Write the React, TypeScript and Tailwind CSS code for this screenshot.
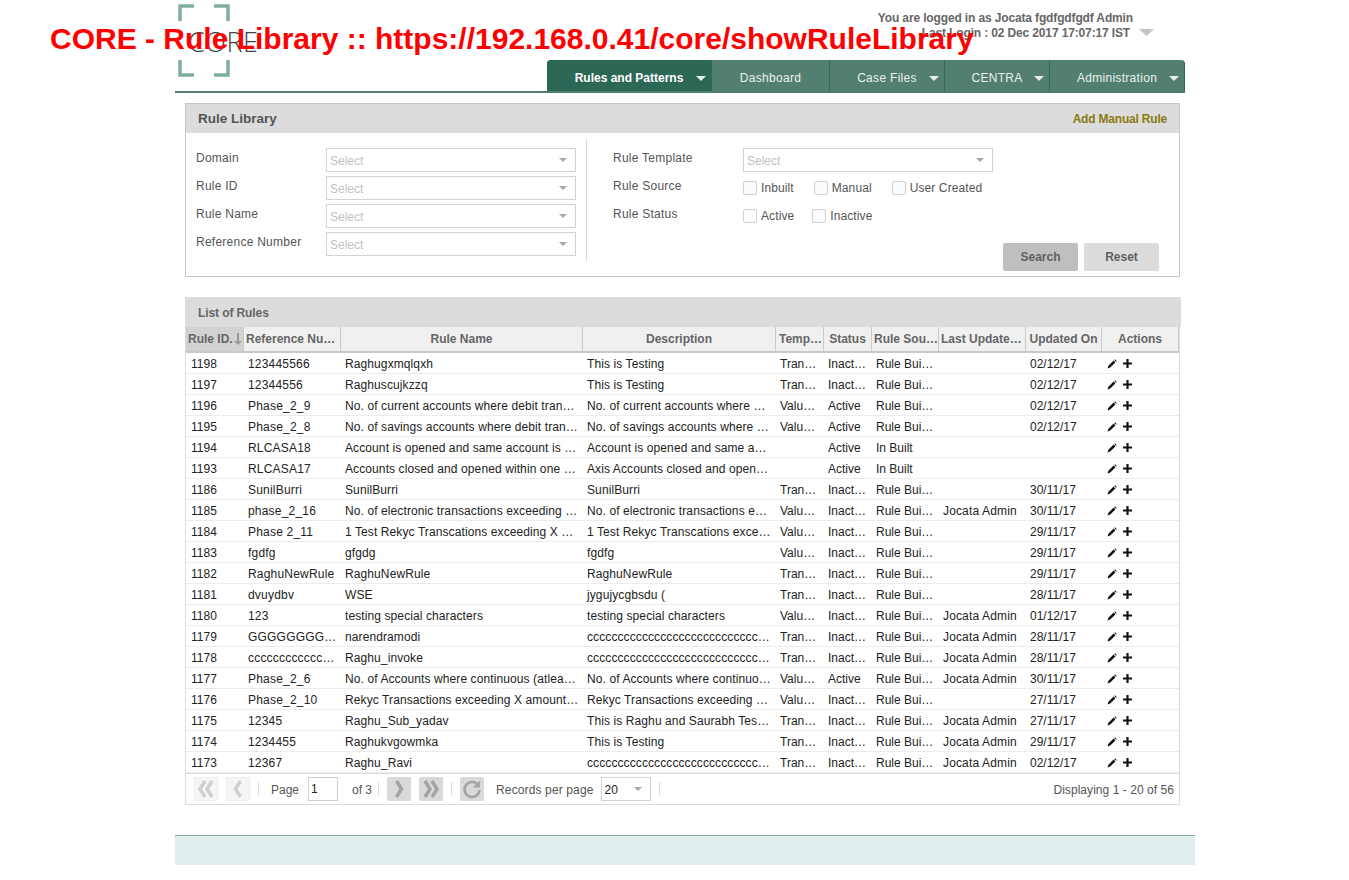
import React from "react";

const F = "font-['Liberation_Sans',Arial,sans-serif]";
const cols = "grid-cols-[58px_97px_242px_193px_48px_48px_67px_87px_76px_77px]";
type R = [string, string, string, string, string, string, string, string, string];
const T = "Transaction Pattern";
const V = "Value Based Pattern";
const I = "Inactive";
const A = "Active";
const B = "Rule Builder";
const J = "Jocata Admin";
const C = "cccccccccccccccccccccccccccccccccccccccccccccccccccccc";
const rows: R[] = [
  ["1198", "123445566", "Raghugxmqlqxh", "This is Testing", T, I, B, "", "02/12/17"],
  ["1197", "12344556", "Raghuscujkzzq", "This is Testing", T, I, B, "", "02/12/17"],
  ["1196", "Phase_2_9", "No. of current accounts where debit transactions exceeding", "No. of current accounts where debit transactions", V, A, B, "", "02/12/17"],
  ["1195", "Phase_2_8", "No. of savings accounts where debit transactions exceeding", "No. of savings accounts where debit transactions", V, A, B, "", "02/12/17"],
  ["1194", "RLCASA18", "Account is opened and same account is closed within", "Account is opened and same account is closed", "", A, "In Built", "", ""],
  ["1193", "RLCASA17", "Accounts closed and opened within one month of each other", "Axis Accounts closed and opened within one", "", A, "In Built", "", ""],
  ["1186", "SunilBurri", "SunilBurri", "SunilBurri", T, I, B, "", "30/11/17"],
  ["1185", "phase_2_16", "No. of electronic transactions exceeding X amount in a period", "No. of electronic transactions exceeding X", V, I, B, J, "30/11/17"],
  ["1184", "Phase 2_11", "1 Test Rekyc Transcations exceeding X amount in a period", "1 Test Rekyc Transcations exceeding X amount", V, I, B, "", "29/11/17"],
  ["1183", "fgdfg", "gfgdg", "fgdfg", V, I, B, "", "29/11/17"],
  ["1182", "RaghuNewRule", "RaghuNewRule", "RaghuNewRule", T, I, B, "", "29/11/17"],
  ["1181", "dvuydbv", "WSE", "jygujycgbsdu (", T, I, B, "", "28/11/17"],
  ["1180", "123", "testing special characters", "testing special characters", V, I, B, J, "01/12/17"],
  ["1179", "GGGGGGGGGGGGGG", "narendramodi", C, T, I, B, J, "28/11/17"],
  ["1178", "cccccccccccccccccccc", "Raghu_invoke", C, T, I, B, J, "28/11/17"],
  ["1177", "Phase_2_6", "No. of Accounts where continuous (atleast) transactions over", "No. of Accounts where continuous transactions", V, A, B, J, "30/11/17"],
  ["1176", "Phase_2_10", "Rekyc Transactions exceeding X amount in a given period", "Rekyc Transactions exceeding X amount in a", V, I, B, "", "27/11/17"],
  ["1175", "12345", "Raghu_Sub_yadav", "This is Raghu and Saurabh Testing the rule", T, I, B, J, "27/11/17"],
  ["1174", "1234455", "Raghukvgowmka", "This is Testing", T, I, B, J, "29/11/17"],
  ["1173", "12367", "Raghu_Ravi", C, T, I, B, J, "02/12/17"],
];

function Caret({ className }: { className: string }) {
  return (
    <svg viewBox="0 0 10 5" preserveAspectRatio="none" className={className}>
      <path d="M0 0h10L5 5z" fill="currentColor" />
    </svg>
  );
}

function Select({ w = "w-[250px]", value, placeholder = "Select" }: { w?: string; value?: string; placeholder?: string }) {
  return (
    <div className={`${w} h-6 border border-[#d2d2d2] bg-white flex items-center justify-between pl-[3px] pr-[8px] shrink-0`}>
      <span className={`pt-[2px] ${value ? "text-[#222]" : "text-[#c2c2c2]"}`}>{value ?? placeholder}</span>
      <Caret className="w-[8px] h-[4px] text-[#a8a8a8]" />
    </div>
  );
}

function Check({ label, className = "" }: { label: string; className?: string }) {
  return (
    <div className={`flex items-center text-[#555] tracking-[0.1px] ${className}`}>
      <span className="w-[14px] h-[14px] border border-[#d0d0d0] rounded-[2px] bg-[#fbfbfb] mr-[4px]" />
      <span>{label}</span>
    </div>
  );
}

function Field({ label, children, w }: { label: string; children: React.ReactNode; w: string }) {
  return (
    <div className="flex h-6 items-start mb-1">
      <span className={`${w} text-[#555] leading-[20px] tracking-[0.25px]`}>{label}</span>
      {children}
    </div>
  );
}

function Pencil() {
  return (
    <svg viewBox="0 0 10 10" className="w-[10px] h-[10px]">
      <path d="M0.5 9.5 L1.4 6.8 L6.6 1.6 L8.4 3.4 L3.2 8.6 Z M7.3 0.9 L8 0.3 L9.7 2 L9.1 2.7 Z" fill="#111" />
    </svg>
  );
}

function Plus() {
  return (
    <svg viewBox="0 0 10 10" className="w-[9px] h-[9px]">
      <path d="M3.8 0h2.4v3.8H10v2.4H6.2V10H3.8V6.2H0V3.8h3.8z" fill="#111" />
    </svg>
  );
}

function PagerBtn({ kind, on, className = "" }: { kind: "first" | "prev" | "next" | "last" | "refresh"; on?: boolean; className?: string }) {
  const stroke = on ? "#a4a4a4" : "#d0d0d0";
  const paths: Record<string, string> = {
    first: "M11 4 L6 12 L11 20 M18 4 L13 12 L18 20",
    prev: "M14.5 4 L9.5 12 L14.5 20",
    next: "M9.5 4 L14.5 12 L9.5 20",
    last: "M6 4 L11 12 L6 20 M13 4 L18 12 L13 20",
    refresh: "M18 8 A7.5 7.5 0 1 0 19.5 13",
  };
  return (
    <div className={`w-6 h-6 rounded-[2px] flex items-center justify-center shrink-0 ${on ? "bg-[#dadada]" : "bg-[#f6f6f6] border border-[#eeeeee]"} ${className}`}>
      <svg viewBox="0 0 24 24" className="w-6 h-6 shrink-0">
        <path d={paths[kind]} fill="none" stroke={stroke} strokeWidth={kind === "refresh" ? 2.6 : 3.6} />
        {kind === "refresh" && <path d="M20 3.5v7h-7z" fill={stroke} />}
      </svg>
    </div>
  );
}

const Sep = ({ className }: { className: string }) => <span className={`w-px h-[14px] bg-[#dcdcdc] shrink-0 ${className}`} />;

function Tab({ label, w, caret, active }: { label: string; w: string; caret?: boolean; active?: boolean }) {
  return (
    <div className={`${w} h-full relative flex items-center justify-center border-r border-[#2f6a58] last:border-r-0 ${active ? "bg-[#2d6856] text-white font-bold" : "text-[#eaf1ee] tracking-[0.3px]"}`}>
      <span className="pt-[5px]">{label}</span>
      {caret && <Caret className="absolute right-[5px] top-[16px] w-[10px] h-[5px] text-[#e9efec]" />}
    </div>
  );
}

export default function App() {
  return (
    <div className={`${F} relative min-h-[880px] bg-white text-[12px] overflow-hidden`}>
      <div className="absolute left-[50px] top-[21px] text-[30px] leading-[36px] font-bold text-[#ff0000] whitespace-nowrap z-10">
        CORE - Rule Library :: https://192.168.0.41/core/showRuleLibrary
      </div>

      <div className="ml-[175px] w-[1020px]">
        <header className="w-[1010px] h-[93px] border-b-2 border-[#4f7d6f] flex justify-between">
          <div className="relative w-[100px] h-[91px]">
            <svg viewBox="0 0 52 73" className="absolute left-[3px] top-[4px] w-[52px] h-[73px]">
              <path d="M16 2H2V17 M36 2H50V17 M2 56V71H16 M50 56V71H36" fill="none" stroke="#7fae9f" strokeWidth="3.5" />
            </svg>
            <span className="absolute left-[13px] top-[24px] text-[27px] leading-[36px] text-[#444] font-['Open_Sans',sans-serif] font-light tracking-[0.5px]">CORE</span>
          </div>
          <div className="w-[638px] flex flex-col items-stretch">
            <div className="h-[60px] pt-[11px] pr-[52px] text-right font-bold text-[#666] leading-[15px] relative tracking-[-0.14px]">
              <div>You are logged in as Jocata fgdfgdfgdf Admin</div>
              <div className="pr-[3px]">Last Login : 02 Dec 2017 17:07:17 IST</div>
              <Caret className="absolute right-[31px] top-[29px] w-[15px] h-[7px] text-[#c4c4c4]" />
            </div>
            <nav className="h-[31px] flex rounded-t-[4px] overflow-hidden bg-[#527f70] border-r border-[#2f6a58]">
              <Tab label="Rules and Patterns" w="w-[165px]" caret active />
              <Tab label="Dashboard" w="w-[118px]" />
              <Tab label="Case Files" w="w-[115px]" caret />
              <Tab label="CENTRA" w="w-[105px]" caret />
              <Tab label="Administration" w="flex-1" caret />
            </nav>
          </div>
        </header>

        <section className="ml-[10px] w-[995px] mt-[10px] h-[174px] border border-[#c6c6c6]">
          <div className="h-[29px] bg-[#dcdcdc] flex items-center justify-between pl-[12px] pr-[12px]">
            <span className="font-bold text-[13.5px] text-[#555] pt-[2px]">Rule Library</span>
            <span className="font-bold text-[#8a7a10] tracking-[-0.2px]">Add Manual Rule</span>
          </div>
          <div className="flex pt-[15px] pl-[10px]">
            <div className="w-[390px]">
              <Field label="Domain" w="w-[130px]"><Select /></Field>
              <Field label="Rule ID" w="w-[130px]"><Select /></Field>
              <Field label="Rule Name" w="w-[130px]"><Select /></Field>
              <Field label="Reference Number" w="w-[130px]"><Select /></Field>
            </div>
            <div className="w-px h-[122px] bg-[#d6d6d6] -mt-[9px]" />
            <div className="pl-[26px] flex-1 relative">
              <Field label="Rule Template" w="w-[130px]"><Select /></Field>
              <Field label="Rule Source" w="w-[130px]">
                <div className="flex h-6 pt-[3px] items-start">
                  <Check label="Inbuilt" className="mr-[20px]" />
                  <Check label="Manual" className="mr-[20px]" />
                  <Check label="User Created" />
                </div>
              </Field>
              <Field label="Rule Status" w="w-[130px]">
                <div className="flex h-6 pt-[3px] items-start">
                  <Check label="Active" className="mr-[18px]" />
                  <Check label="Inactive" />
                </div>
              </Field>
              <div className="flex justify-end gap-[6px] pr-[20px] mt-[15px]">
                <button className="w-[75px] h-[28px] rounded-[2px] bg-[#bfbfbf] font-bold text-[#5f5f5f]">Search</button>
                <button className="w-[75px] h-[28px] rounded-[2px] bg-[#dcdcdc] font-bold text-[#5f5f5f]">Reset</button>
              </div>
            </div>
          </div>
        </section>

        <section className="ml-[10px] w-[996px] mt-[20px]">
          <div className="h-[30px] bg-[#dcdcdc] flex items-center pl-[13px] pt-[2px] font-bold text-[#666] tracking-[-0.1px]">List of Rules</div>
          <div className="w-[995px] border-x border-b border-[#dcdcdc]">
            <div className={`grid ${cols} h-[24px] bg-[#f0f0f0] border-b-2 border-[#c9c9c9] font-bold text-[#666] box-content`}>
              <div className="bg-[#d2d2d2] flex items-center pl-[2px] border-r border-[#c9c9c9] whitespace-nowrap overflow-hidden">
                Rule ID.
                <svg viewBox="0 0 8 12" className="w-[8px] h-[12px] ml-[1px] shrink-0"><path d="M3 0h2v8h3l-4 4-4-4h3z" fill="#999" /></svg>
              </div>
              <div className="flex items-center pl-[2px] border-r border-[#c9c9c9] whitespace-nowrap overflow-hidden">Reference Nu…</div>
              <div className="flex items-center justify-center border-r border-[#c9c9c9]">Rule Name</div>
              <div className="flex items-center justify-center border-r border-[#c9c9c9]">Description</div>
              <div className="flex items-center pl-[3px] border-r border-[#c9c9c9]">Temp…</div>
              <div className="flex items-center justify-center border-r border-[#c9c9c9]">Status</div>
              <div className="flex items-center pl-[2px] border-r border-[#c9c9c9] whitespace-nowrap">Rule Sou…</div>
              <div className="flex items-center pl-[2px] border-r border-[#c9c9c9] whitespace-nowrap">Last Update…</div>
              <div className="flex items-center justify-center border-r border-[#c9c9c9]">Updated On</div>
              <div className="flex items-center justify-center border-r border-[#c9c9c9]">Actions</div>
            </div>
            <div>
              {rows.map((r) => (
                <div key={r[0]} className={`grid ${cols} h-[21px] pt-px items-center border-b border-[#ececec] text-[#222] leading-[20px]`}>
                  <div className="pl-[5px] truncate">{r[0]}</div>
                  <div className="pl-[4px] pr-[2px] truncate tracking-[0.2px]">{r[1]}</div>
                  <div className="pl-[4px] pr-[4px] truncate tracking-[0.1px]">{r[2]}</div>
                  <div className="pl-[4px] pr-[4px] truncate tracking-[0.1px]">{r[3]}</div>
                  <div className="pl-[4px] pr-[5px] truncate">{r[4]}</div>
                  <div className="pl-[4px] pr-[5px] truncate">{r[5]}</div>
                  <div className="pl-[4px] pr-[5px] truncate">{r[6]}</div>
                  <div className="pl-[4px] truncate tracking-[0.15px]">{r[7]}</div>
                  <div className="pl-[4px] truncate">{r[8]}</div>
                  <div className="pl-[5px] flex items-center gap-[6px]"><Pencil /><Plus /></div>
                </div>
              ))}
            </div>
            <div className="h-[31px] border-t border-[#dcdcdc] flex items-center pl-[8px] pr-[5px] text-[#555]">
              <PagerBtn kind="first" />
              <PagerBtn kind="prev" className="ml-[8px]" />
              <Sep className="ml-[8px]" />
              <span className="ml-[12px] pt-[2px]">Page</span>
              <div className="ml-[9px] w-[30px] h-6 border border-[#cfcfcf] flex items-center pl-[2px] text-[#222]">1</div>
              <span className="ml-[14px] pt-[2px]">of 3</span>
              <Sep className="ml-[6px]" />
              <PagerBtn kind="next" on className="ml-[8px]" />
              <PagerBtn kind="last" on className="ml-[8px]" />
              <Sep className="ml-[8px]" />
              <PagerBtn kind="refresh" on className="ml-[8px]" />
              <span className="ml-[12px] pt-[2px] tracking-[0.13px]">Records per page</span>
              <div className="ml-[7px]"><Select w="w-[50px]" value="20" /></div>
              <Sep className="ml-[8px]" />
              <span className="ml-auto pt-[2px] tracking-[0.05px]">Displaying 1 - 20 of 56</span>
            </div>
          </div>
        </section>

        <footer className="mt-[30px] h-[30px] bg-[#e2eeed] border-t border-[#84aaa8]" />
      </div>
    </div>
  );
}
